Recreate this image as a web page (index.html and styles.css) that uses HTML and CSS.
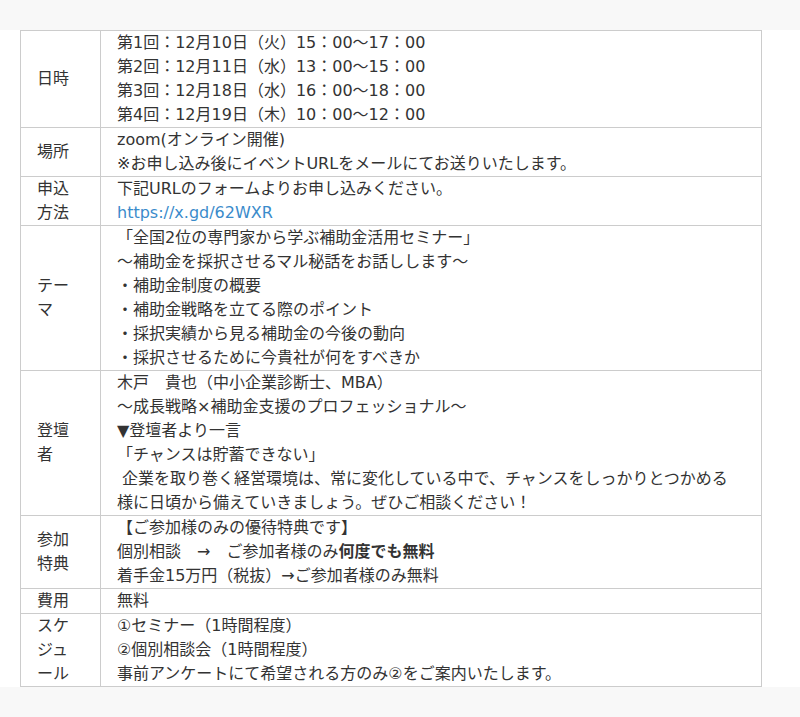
FILE: index.html
```html
<!DOCTYPE html>
<html lang="ja">
<head>
<meta charset="utf-8">
<title>セミナー概要</title>
<link rel="stylesheet" href="styles.css">
</head>
<body>
<div class="sheet">
  <table class="info">
    <colgroup>
      <col class="col-label">
      <col class="col-body">
    </colgroup>
    <tbody>
      <tr>
        <th>日時</th>
        <td>第1回：12月10日（火）15：00〜17：00<br>第2回：12月11日（水）13：00〜15：00<br>第3回：12月18日（水）16：00〜18：00<br>第4回：12月19日（木）10：00〜12：00</td>
      </tr>
      <tr>
        <th>場所</th>
        <td>zoom(オンライン開催)<br>※お申し込み後にイベントURLをメールにてお送りいたします。</td>
      </tr>
      <tr>
        <th>申込方法</th>
        <td>下記URLのフォームよりお申し込みください。<br><a class="link" href="#">https://x.gd/62WXR</a></td>
      </tr>
      <tr>
        <th>テーマ</th>
        <td>「全国2位の専門家から学ぶ補助金活用セミナー」<br>〜補助金を採択させるマル秘話をお話しします〜<br>・補助金制度の概要<br>・補助金戦略を立てる際のポイント<br>・採択実績から見る補助金の今後の動向<br>・採択させるために今貴社が何をすべきか</td>
      </tr>
      <tr>
        <th>登壇者</th>
        <td>木戸　貴也（中小企業診断士、MBA）<br>〜成長戦略×補助金支援のプロフェッショナル〜<br>▼登壇者より一言<br>「チャンスは貯蓄できない」<br>&nbsp;企業を取り巻く経営環境は、常に変化している中で、チャンスをしっかりとつかめる<br>様に日頃から備えていきましょう。ぜひご相談ください！</td>
      </tr>
      <tr>
        <th>参加特典</th>
        <td>【ご参加様のみの優待特典です】<br>個別相談　→　ご参加者様のみ<strong>何度でも無料</strong><br>着手金15万円（税抜）→ご参加者様のみ無料</td>
      </tr>
      <tr>
        <th>費用</th>
        <td>無料</td>
      </tr>
      <tr>
        <th>スケジュール</th>
        <td>①セミナー（1時間程度）<br>②個別相談会（1時間程度）<br>事前アンケートにて希望される方のみ②をご案内いたします。</td>
      </tr>
    </tbody>
  </table>
</div>
</body>
</html>
```

FILE: styles.css
```css
html, body {
  margin: 0;
  padding: 0;
  background: #f8f8f8;
}

body {
  font-family: "DejaVu Sans", "Noto Sans CJK JP", sans-serif;
  font-size: 16px;
  line-height: 24px;
  color: #333333;
}

.sheet {
  margin-top: 30px;
  background: #ffffff;
  padding: 0 20px;
  height: 657px;
}

.info {
  width: 742px;
  border-collapse: collapse;
  table-layout: fixed;
}

.col-label {
  width: 80px;
}

.info th,
.info td {
  border: 1px solid #cccccc;
  padding: 0 16px;
  text-align: left;
  font-weight: normal;
  line-height: 24px;
}

.info th {
  vertical-align: middle;
  padding-right: 20px;
  line-break: anywhere;
}

.info td {
  vertical-align: top;
}

.info strong {
  font-weight: bold;
}

.link {
  color: #3a8bcb;
  text-decoration: none;
}
```
